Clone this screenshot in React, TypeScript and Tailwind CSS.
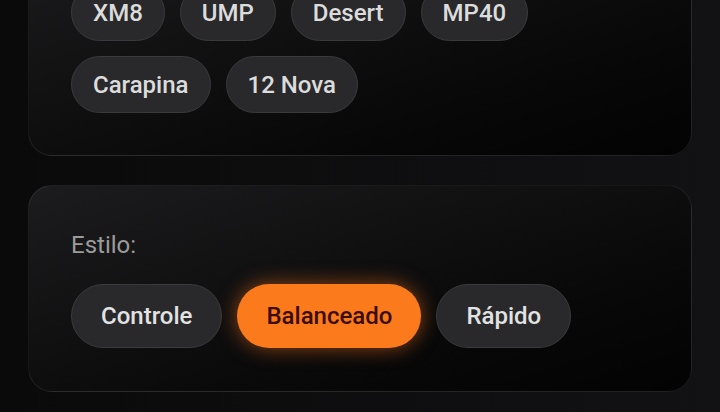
const weapons = [["XM8", "UMP", "Desert", "MP40"], ["Carapina", "12 Nova"]];

const styles = [
  { label: "Controle", active: false },
  { label: "Balanceado", active: true },
  { label: "Rápido", active: false },
];

export default function App() {
  return (
    <div
      className="min-h-screen w-full overflow-hidden bg-gradient-to-r from-[#0a0a0b] to-[#121214] px-[28px] pb-[21px]"
      style={{ fontFamily: "Roboto, 'Noto Sans', sans-serif" }}
    >
      <div className="-mt-[59px] flex flex-col gap-[29px]">
        {/* Armas */}
        <section className="rounded-[24px] border border-white/[0.08] bg-gradient-to-br from-[#1c1c1e] to-[#030303] p-[42px]">
          <div className="flex flex-col gap-[15px]">
            {weapons.map((row, i) => (
              <div key={i} className="flex gap-[15px]">
                {row.map((w) => (
                  <button
                    key={w}
                    className="flex h-[57px] items-center rounded-full border border-[#3a3a3d] bg-[#29292b] px-[21px] text-[24px] font-medium text-[#dcdcdc]"
                  >
                    {w}
                  </button>
                ))}
              </div>
            ))}
          </div>
        </section>

        {/* Estilo */}
        <section className="rounded-[24px] border border-white/[0.08] bg-gradient-to-br from-[#1c1c1e] to-[#030303] px-[42px] pt-[42px] pb-[43px]">
          <div className="mb-[22px] text-[24px] leading-[34px] text-[#9b9b9b]">Estilo:</div>
          <div className="flex gap-[15px]">
            {styles.map((s) =>
              s.active ? (
                <button
                  key={s.label}
                  className="flex h-[64px] items-center rounded-full bg-[#fb7b1c] px-[29px] text-[24px] font-medium text-[#3a0c02] shadow-[0_0_20px_rgba(249,115,22,0.55)]"
                >
                  {s.label}
                </button>
              ) : (
                <button
                  key={s.label}
                  className="flex h-[64px] items-center rounded-full border border-[#3a3a3d] bg-[#29292b] px-[29px] text-[24px] font-medium text-[#e2e2e2]"
                >
                  {s.label}
                </button>
              )
            )}
          </div>
        </section>
      </div>
    </div>
  );
}
